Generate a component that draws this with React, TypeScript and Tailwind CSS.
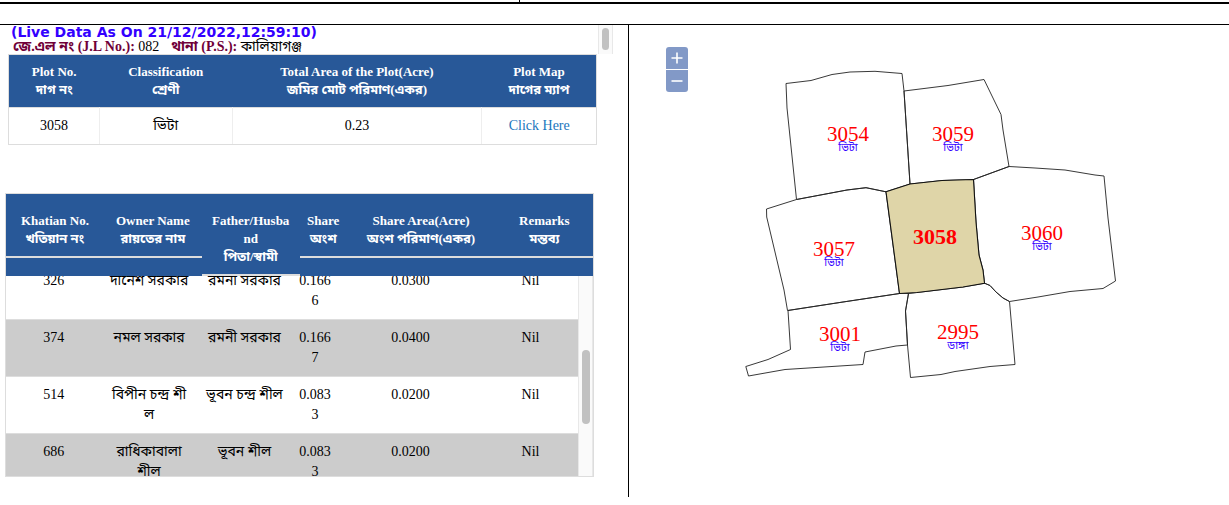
import React from "react";

type Owner = {
  khatian: string;
  name: string;
  father: string;
  share: string;
  area: string;
  remarks: string;
};

const owners: Owner[] = [
  { khatian: "326", name: "দীনেশ সরকার", father: "রমনী সরকার", share: "0.1666", area: "0.0300", remarks: "Nil" },
  { khatian: "374", name: "নমল সরকার", father: "রমনী সরকার", share: "0.1667", area: "0.0400", remarks: "Nil" },
  { khatian: "514", name: "বিপীন চন্দ্র শী\nল", father: "ভূবন চন্দ্র শীল", share: "0.0833", area: "0.0200", remarks: "Nil" },
  { khatian: "686", name: "রাধিকাবালা শীল", father: "ভূবন শীল", share: "0.0833", area: "0.0200", remarks: "Nil" },
];

const plotColumns = [
  { en: "Plot No.", bn: "দাগ নং", width: "w-[15.4%]" },
  { en: "Classification", bn: "শ্রেণী", width: "w-[22.6%]" },
  { en: "Total Area of the Plot(Acre)", bn: "জমির মোট পরিমাণ(একর)", width: "w-[42.5%]" },
  { en: "Plot Map", bn: "দাগের ম্যাপ", width: "w-[19.5%]" },
];

const ownerColumns = [
  { en: "Khatian No.", bn: "খতিয়ান নং", width: "w-[16.67%]" },
  { en: "Owner Name", bn: "রায়তের নাম", width: "w-[16.67%]" },
  { en: "Father/Husband", bn: "পিতা/স্বামী", width: "w-[16.67%]" },
  { en: "Share", bn: "অংশ", width: "w-[8%]" },
  { en: "Share Area(Acre)", bn: "অংশ পরিমাণ(একর)", width: "w-[25.32%]" },
  { en: "Remarks", bn: "মন্তব্য", width: "w-[16.67%]" },
];

const parcels = [
  "786,83.5 811,80.5 832,74.5 850,72 875,71.3 902,73.5 904,91 910,184 886,191.8 866,187.7 847,190 796.5,199.5 787,108",
  "904,91 948,85.5 984,79.5 1001,114.5 1003,130 1009,166.5 973.5,179.5 942,180.5 910,184",
  "1009,166.5 1035,168 1065,170 1095,175 1104,176 1108,218 1115.5,281 1103,288.5 1070,291.5 1038,297 1009.5,301.5 1003,298 996,292 990,285.5 984.5,283.2 983,270 979,255 976,222 973.5,179.5",
  "766.5,209 796.5,199.5 847,190 866,187.7 886,191.8 899.5,293.5 843,302 787.5,310.5 784,290 766.7,217",
  "788,310.5 790.5,349.5 768,359.5 745.8,366.5 748.5,376 785,369.5 863,364.5 865,352 896,346 907.5,345 905.5,311 908.5,293.5 899.5,293.5 843,302",
  "908.5,293.5 905.5,311 907.5,345 910.5,377.5 941,374.5 955,371.5 990,366.5 1015,364.5 1009.5,301.5 1003,298 996,292 990,285.5 984.5,283.2 963,287",
];

const selectedParcel =
  "886,191.8 910,184 942,180.5 973.5,179.5 976,222 979,255 983,270 984.5,283.2 963,287 917,292.5 899.5,293.5";

const labels = [
  { no: "3054", kind: "ভিটা", x: 848, y: 141 },
  { no: "3059", kind: "ভিটা", x: 953, y: 141 },
  { no: "3057", kind: "ভিটা", x: 834, y: 256 },
  { no: "3060", kind: "ভিটা", x: 1042, y: 240 },
  { no: "3001", kind: "ভিটা", x: 840, y: 341 },
  { no: "2995", kind: "ডাঙ্গা", x: 958, y: 339 },
];

function PlotHeading() {
  return (
    <div className="mr-[15px] flex h-[29px] overflow-hidden">
      <div className="flex-1 pl-[11px]">
        <p className="font-['DejaVu_Sans',sans-serif] text-[14px] leading-[14px] font-bold whitespace-nowrap text-[#3300ff]">
          (Live Data As On 21/12/2022,12:59:10)
        </p>
        <p className="pl-0.5 text-[14px] leading-[15px] whitespace-nowrap">
          <b className="text-[#700038]">জে.এল নং (J.L No.):</b> 082
          <b className="ml-3 text-[#700038]">থানা (P.S.):</b> কালিয়াগঞ্জ
        </p>
      </div>
      <div className="w-[15px] border-x border-[#e8e8e8] bg-[#fafafa] px-[3px] pt-[3px]">
        <div className="h-[22px] rounded-full bg-[#c1c1c1]" />
      </div>
    </div>
  );
}

function PlotTable() {
  return (
    <div className="mr-[31px] ml-2 border border-[#ddd]">
      <table className="w-full table-fixed border-collapse text-center text-[14px]">
        <thead>
          <tr className="bg-[#285898] text-[13px] leading-[18px] text-white">
            {plotColumns.map((c) => (
              <th key={c.en} className={`${c.width} px-2 py-2 font-bold`}>
                {c.en}
                <br />
                {c.bn}
              </th>
            ))}
          </tr>
        </thead>
        <tbody>
          <tr className="border-t border-[#ddd] leading-5 [&>td]:py-2">
            <td>3058</td>
            <td className="border-l border-[#eee]">ভিটা</td>
            <td className="border-l border-[#eee]">0.23</td>
            <td className="border-l border-[#eee]">
              <a href="#map" className="text-[#1a76bd]">Click Here</a>
            </td>
          </tr>
        </tbody>
      </table>
    </div>
  );
}

function OwnerTable() {
  return (
    <div className="relative mt-12 mr-[34px] ml-[5px] border border-[#ddd]">
      <table className="block text-center text-[14px]">
        <thead className="block bg-[#285898] text-[13px] leading-[18px] text-white">
          <tr className="flex items-start">
            {ownerColumns.map((c) => (
              <th key={c.en} className={`${c.width} border-b-2 border-[#ddd] px-[7px] pt-[18px] pb-2 font-bold break-all`}>
                {c.en}
                <br />
                {c.bn}
              </th>
            ))}
          </tr>
        </thead>
        <tbody className="flex h-[200px] flex-col justify-end overflow-hidden pr-[15px]">
          {owners.map((o, row) => (
            <tr
              key={o.khatian}
              className={`flex h-[57px] shrink-0 border-t border-[#ddd] leading-5 last:-mb-[14px] ${row % 2 ? "bg-[#ccc]" : "bg-white"}`}
            >
              {[o.khatian, o.name, o.father, o.share, o.area, o.remarks].map((v, i) => (
                <td key={i} className={`${ownerColumns[i].width} px-[7px] py-2 break-all whitespace-pre-line`}>
                  {v}
                </td>
              ))}
            </tr>
          ))}
        </tbody>
      </table>
      <div className="absolute right-0 bottom-0 h-[200px] w-[15px] border-x border-[#e8e8e8] bg-[#fafafa] px-[3px] pt-[74px]">
        <div className="h-[74px] w-2 rounded-full bg-[#c1c1c1]" />
      </div>
    </div>
  );
}

function PlotMap() {
  return (
    <section id="map" className="relative min-w-0 flex-1 overflow-hidden">
      <svg width="600" height="471" viewBox="629 25 600 471" className="block max-w-none" aria-label="Plot map">
        <g fill="none" stroke="#222" strokeWidth="0.9" strokeLinejoin="round">
          {parcels.map((p) => (
            <polygon key={p} points={p} />
          ))}
        </g>
        <polygon points={selectedParcel} fill="#dfd5a8" stroke="#111" strokeWidth="1.1" />
        <g textAnchor="middle">
          {labels.map((l) => (
            <g key={l.no}>
              <text x={l.x} y={l.y} className="fill-[#f00] text-[21px]">{l.no}</text>
              <text x={l.x} y={l.y + 10} className="fill-[#3300ff] text-[11px]">{l.kind}</text>
            </g>
          ))}
          <text x="935" y="244" className="fill-[#f00] text-[22px] font-bold">3058</text>
        </g>
      </svg>
      <div className="absolute top-[22px] left-[37px] flex flex-col gap-px">
        <button type="button" aria-label="Zoom in" className="flex size-[22px] items-center justify-center rounded-t-[3px] bg-[#8299c7]">
          <svg width="12" height="12" viewBox="0 0 12 12" stroke="#fff" strokeWidth="1.6">
            <path d="M6 0.5v11M0.5 6h11" />
          </svg>
        </button>
        <button type="button" aria-label="Zoom out" className="flex size-[22px] items-center justify-center rounded-b-[3px] bg-[#8299c7]">
          <svg width="12" height="12" viewBox="0 0 12 12" stroke="#fff" strokeWidth="1.6">
            <path d="M0.5 6h11" />
          </svg>
        </button>
      </div>
    </section>
  );
}

export default function App() {
  return (
    <main className="bg-white font-['Liberation_Serif','Noto_Sans_Bengali',serif] text-black">
      <div className="flex h-1 border-b-2 border-black">
        <div className="w-[42.3%] border-r border-black" />
      </div>
      <div className="mt-5 flex border-t border-black">
        <section className="w-[51.2%] shrink-0 border-r border-black pb-5">
          <PlotHeading />
          <PlotTable />
          <OwnerTable />
        </section>
        <PlotMap />
      </div>
    </main>
  );
}
